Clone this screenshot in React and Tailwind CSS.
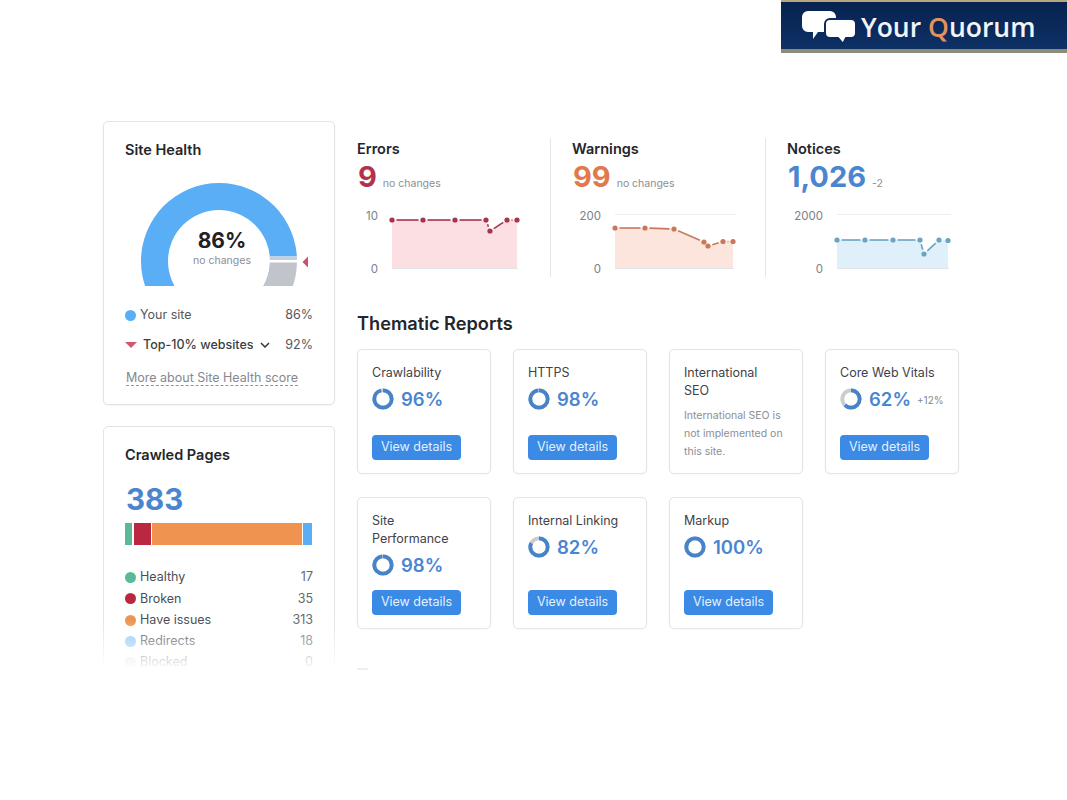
const stats = [
  {
    title: "Errors",
    value: "9",
    note: "no changes",
    valueClass: "text-[#b2324c]",
    x: 357,
    labelX: 378,
    top: "10",
    grid: false,
    area: "#fbdfe2",
    line: "#a5344f",
    points: [[392, 220], [423, 220], [455, 220], [486, 220], [490, 231], [507, 220], [517, 220]],
  },
  {
    title: "Warnings",
    value: "99",
    note: "no changes",
    valueClass: "text-[#e2794d]",
    x: 572,
    labelX: 601,
    top: "200",
    grid: true,
    area: "#fbe5dd",
    line: "#c8795c",
    points: [[615, 228], [645, 228], [674, 229], [704, 242], [708, 246], [723, 241.5], [733, 241.5]],
  },
  {
    title: "Notices",
    value: "1,026",
    note: "-2",
    valueClass: "text-[#4a86d0]",
    x: 787,
    labelX: 823,
    top: "2000",
    grid: true,
    area: "#e0f0fb",
    line: "#6aa5bf",
    points: [[837, 240], [865, 240], [893, 240], [920, 240], [924, 254], [939, 240], [948, 240.5]],
  },
];

const firstRow = [
  { title: "Crawlability", pct: 96 },
  { title: "HTTPS", pct: 98 },
  { title: "International SEO", text: "International SEO is not implemented on this site.", narrow: true },
  { title: "Core Web Vitals", pct: 62, delta: "+12%" },
];

const secondRow = [
  { title: "Site Performance", pct: 98, narrow: true },
  { title: "Internal Linking", pct: 82 },
  { title: "Markup", pct: 100 },
];

const pages = [
  { label: "Healthy", count: 17, dot: "bg-[#5bb898]" },
  { label: "Broken", count: 35, dot: "bg-[#bb2740]" },
  { label: "Have issues", count: 313, dot: "bg-[#ee9350]" },
  { label: "Redirects", count: 18, dot: "bg-[#8cc4f5]" },
  { label: "Blocked", count: 0, dot: "bg-[#d5d8dc]" },
];

function Logo() {
  return (
    <div className="flex h-[53px] w-[286px] items-center border-t-[2px] border-b-[4px] border-t-[#b7a67e] border-b-[#8f8b78] bg-gradient-to-b from-[#07224f] to-[#0e3166] pt-[4px]">
      <svg width="56" height="36" viewBox="0 0 56 36" className="ml-[21px] shrink-0">
        <path d="M6 1h22a6 6 0 0 1 6 6v9a6 6 0 0 1-6 6H16l-5 7 0-7H6a6 6 0 0 1-6-6V7a6 6 0 0 1 6-6z" fill="#fff" />
        <path
          d="M28 9h21a5 5 0 0 1 5 5v9a5 5 0 0 1-5 5h-5l-3 6-5-6h-8a5 5 0 0 1-5-5v-9a5 5 0 0 1 5-5z"
          fill="#fff"
          stroke="#0b2b60"
          strokeWidth="2"
        />
      </svg>
      <span className="ml-[3px] font-['Open_Sans',sans-serif] text-[26.5px] font-semibold text-[#f2f5f9]">
        Your <span className="text-[#e0935f]">Q</span>uorum
      </span>
    </div>
  );
}

function Gauge() {
  return (
    <div className="relative ml-[16px] mt-[23px] h-[103px] w-[170px]">
      <svg width="170" height="103" viewBox="141 183 170 103" className="block">
        <defs>
          <clipPath id="blue-part">
            <path d="M130 175H300V256.5H270V286H130z" />
          </clipPath>
          <clipPath id="thin-part">
            <rect x="260" y="256.5" width="40" height="3.5" />
          </clipPath>
          <clipPath id="grey-part">
            <rect x="250" y="262.5" width="50" height="23.5" />
          </clipPath>
        </defs>
        <path
          fillRule="evenodd"
          fill="#5aaef6"
          clipPath="url(#blue-part)"
          d="M141 261a78 78 0 1 0 156 0a78 78 0 1 0-156 0zM168 261a51 51 0 1 0 102 0a51 51 0 1 0-102 0z"
        />
        <path
          fillRule="evenodd"
          fill="#c3d0dc"
          clipPath="url(#thin-part)"
          d="M141 261a78 78 0 1 0 156 0a78 78 0 1 0-156 0zM168 261a51 51 0 1 0 102 0a51 51 0 1 0-102 0z"
        />
        <path
          fillRule="evenodd"
          fill="#c1c4cb"
          clipPath="url(#grey-part)"
          d="M141 261a78 78 0 1 0 156 0a78 78 0 1 0-156 0zM168 261a51 51 0 1 0 102 0a51 51 0 1 0-102 0z"
        />
        <path d="M302.5 262l5.5-5.5v11z" fill="#c9506e" />
      </svg>
      <div className="absolute left-[19px] top-[45px] w-[124px] text-center">
        <div className="text-[21px] font-bold leading-[26px] text-[#1f2126]">86%</div>
        <div className="text-[10.5px] leading-[13px] text-[#8b8e94]">no changes</div>
      </div>
    </div>
  );
}

function SiteHealth() {
  return (
    <section className="h-[284px] rounded-[5px] border border-[#e1e3e6] bg-white pl-[21px] pr-[21px] pt-[18px] shadow-[0_1px_2px_rgba(0,0,0,0.04)]">
      <h2 className="text-[14.5px] font-semibold leading-[20px] text-[#24262b]">Site Health</h2>
      <Gauge />
      <div className="mt-[20px] flex h-[18px] items-center text-[12.5px] text-[#55585e]">
        <span className="h-[11px] w-[11px] rounded-full bg-[#5aaef6]" />
        <span className="ml-[4px]">Your site</span>
        <span className="ml-auto">86%</span>
      </div>
      <div className="mt-[12px] flex h-[18px] items-center text-[12.5px] text-[#3c3f45]">
        <svg width="12" height="6" viewBox="0 0 12 6" className="shrink-0">
          <path d="M0 0h12L6 6z" fill="#cf5774" />
        </svg>
        <span className="ml-[6px] font-medium">Top-10% websites</span>
        <svg width="10" height="6" viewBox="0 0 10 6" className="ml-[6px] shrink-0">
          <path d="M1 1l4 4 4-4" fill="none" stroke="#33363b" strokeWidth="1.5" />
        </svg>
        <span className="ml-auto text-[#55585e]">92%</span>
      </div>
      <a className="ml-[1px] mt-[16px] inline-block border-b border-dashed border-[#8f9298] text-[12.5px] leading-[15px] text-[#85888e]">
        More about Site Health score
      </a>
    </section>
  );
}

function CrawledPages() {
  return (
    <section className="mt-[21px] h-[300px] rounded-[5px] border border-[#e1e3e6] bg-white pl-[21px] pr-[21px] pt-[18px]">
      <h2 className="text-[14.5px] font-semibold leading-[20px] text-[#24262b]">Crawled Pages</h2>
      <div className="ml-[1px] mt-[16px] text-[29.5px] font-bold leading-[36px] text-[#4a86d0]">383</div>
      <div className="mt-[6px] flex h-[22px] w-[187px] gap-[1.5px]">
        <div className="w-[7px] bg-[#5bb898]" />
        <div className="w-[17px] bg-[#bb2740]" />
        <div className="flex-1 bg-[#ee9350]" />
        <div className="w-[9px] bg-[#5aaef6]" />
      </div>
      <ul className="mt-[22px]">
        {pages.map((row) => (
          <li key={row.label} className="flex h-[21.3px] items-center text-[12.5px] text-[#4b4e54]">
            <span className={`h-[11px] w-[11px] rounded-full ${row.dot}`} />
            <span className="ml-[4px]">{row.label}</span>
            <span className="ml-auto text-[#64686e]">{row.count}</span>
          </li>
        ))}
      </ul>
    </section>
  );
}

// the line stops short of each dot, so the dots look detached from it
function gapSegment(a, b, gap) {
  const dx = b[0] - a[0];
  const dy = b[1] - a[1];
  const len = Math.hypot(dx, dy);
  if (len <= gap * 2) return null;
  const ux = (dx / len) * gap;
  const uy = (dy / len) * gap;
  return { x1: a[0] + ux, y1: a[1] + uy, x2: b[0] - ux, y2: b[1] - uy };
}

function Chart({ stat }) {
  const pts = stat.points;
  const first = pts[0];
  const last = pts[pts.length - 1];
  const line = pts.map((p) => p.join(",")).join(" ");
  const area = `${first[0]},268.5 ${line} ${last[0]},268.5`;
  return (
    <svg width="190" height="72" viewBox={`${stat.x} 205 190 72`} className="mt-[11px] block">
      {stat.grid && <line x1={first[0]} x2={last[0] + 3} y1="214.5" y2="214.5" stroke="#eceef0" />}
      <polygon points={area} fill={stat.area} />
      <line x1={first[0]} x2={last[0] + 1} y1="268.5" y2="268.5" stroke="#e2e4e7" />
      {pts.slice(1).map((p, i) => {
        const seg = gapSegment(pts[i], p, 4.5);
        return seg && <line key={p[0]} {...seg} stroke={stat.line} strokeWidth="1.6" />;
      })}
      {pts.map((p) => (
        <circle key={p[0]} cx={p[0]} cy={p[1]} r="2.6" fill={stat.line} />
      ))}
      <text x={stat.labelX} y="219.5" textAnchor="end" fontSize="11.5" fill="#7d8086">
        {stat.top}
      </text>
      <text x={stat.labelX} y="272.5" textAnchor="end" fontSize="11.5" fill="#7d8086">
        0
      </text>
    </svg>
  );
}

function StatColumn({ stat, last }) {
  return (
    <div className={`h-[139px] w-[194px] shrink-0 ${last ? "" : "mr-[21px] border-r border-[#e3e5e8]"}`}>
      <h3 className="text-[14.5px] font-semibold leading-[22px] text-[#24262b]">{stat.title}</h3>
      <div className="flex h-[34px] items-center">
        <span className={`ml-[1px] text-[29px] font-bold leading-[34px] ${stat.valueClass}`}>{stat.value}</span>
        <span className="ml-[6px] mt-[13px] text-[10.5px] text-[#8b8e94]">{stat.note}</span>
      </div>
      <Chart stat={stat} />
    </div>
  );
}

function Donut({ pct }) {
  const c = 2 * Math.PI * 8.7;
  return (
    <svg width="22" height="22" viewBox="0 0 22 22" className="shrink-0 -rotate-90">
      <circle cx="11" cy="11" r="8.7" fill="none" stroke="#c9ccd1" strokeWidth="3.8" />
      <circle
        cx="11"
        cy="11"
        r="8.7"
        fill="none"
        stroke="#4683c8"
        strokeWidth="3.8"
        strokeDasharray={`${(c * pct) / 100} ${c}`}
      />
    </svg>
  );
}

function ReportCard({ card }) {
  return (
    <div className="flex flex-col rounded-[5px] border border-[#e1e3e6] bg-white pb-[13px] pl-[14px] pr-[10px] pt-[14px] shadow-[0_1px_2px_rgba(0,0,0,0.03)]">
      <div className={`text-[12.5px] leading-[18px] text-[#3f4248] ${card.narrow ? "w-[90px]" : ""}`}>{card.title}</div>
      {card.text ? (
        <p className="mt-[7px] w-[108px] text-[10.5px] leading-[18px] text-[#8b8e94]">{card.text}</p>
      ) : (
        <>
          <div className="mt-[6px] flex h-[22px] items-center">
            <Donut pct={card.pct} />
            <span className="ml-[7px] text-[18.5px] font-semibold leading-[22px] text-[#4a86d0]">{card.pct}%</span>
            {card.delta && <span className="ml-[6px] mt-[3px] text-[10px] text-[#85888e]">{card.delta}</span>}
          </div>
          <button className="mt-auto h-[25px] w-[89px] rounded-[4px] bg-[#3a8ae6] text-[12.5px] text-[#e4f0fd]">
            View details
          </button>
        </>
      )}
    </div>
  );
}

export default function App() {
  return (
    <div className="h-[800px] w-[1067px] overflow-hidden bg-white font-['Inter',sans-serif]">
      <header className="flex h-[53px] justify-end">
        <Logo />
      </header>

      <main className="relative mt-[68px] flex h-[549px] overflow-hidden pl-[103px]">
        <div className="w-[232px] shrink-0">
          <SiteHealth />
          <CrawledPages />
        </div>

        <div className="ml-[22px] w-[630px] pt-[17px]">
          <div className="flex">
            {stats.map((stat, i) => (
              <StatColumn key={stat.title} stat={stat} last={i === stats.length - 1} />
            ))}
          </div>

          <h2 className="mt-[33px] text-[18.2px] font-semibold leading-[26px] text-[#24262b]">Thematic Reports</h2>

          <div className="mt-[13px] grid w-[602px] grid-cols-4 grid-rows-[125px_132px] gap-x-[22px] gap-y-[23px]">
            {firstRow.map((card) => (
              <ReportCard key={card.title} card={card} />
            ))}
            {secondRow.map((card) => (
              <ReportCard key={card.title} card={card} />
            ))}
          </div>

          <div className="relative z-10 mt-[39px] h-[2px] w-[11px] bg-[#eeeff1]" />
        </div>

        <div className="pointer-events-none absolute bottom-0 left-0 right-0 h-[50px] bg-gradient-to-b from-transparent to-white" />
      </main>
    </div>
  );
}
